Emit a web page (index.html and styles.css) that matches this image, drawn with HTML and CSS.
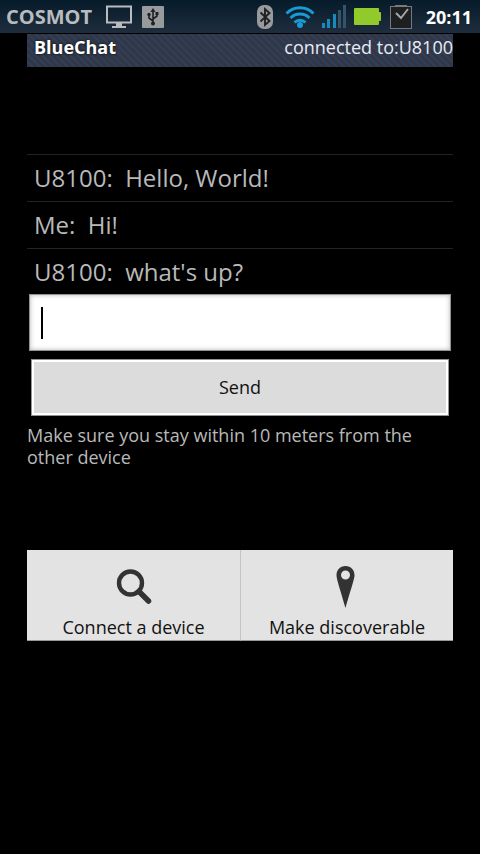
FILE: index.html
```html
<!DOCTYPE html>
<html lang="en">
<head>
<meta charset="utf-8">
<meta name="viewport" content="width=device-width, initial-scale=1">
<title>BlueChat</title>
<link rel="stylesheet" href="styles.css">
</head>
<body>
<div class="status">
  <span class="carrier">COSMOT</span>
  <svg class="monitor" width="26" height="24" viewBox="0 0 26 24" aria-hidden="true"><path d="M1 1.5h24v16H1zM13 17.5v4M6 22h14" fill="none" stroke="#b9bcbf" stroke-width="2"/><path d="M10 18h6v4h-6z" fill="#b9bcbf"/></svg>
  <svg class="usb" width="22" height="22" viewBox="0 0 22 22" aria-hidden="true"><rect width="22" height="22" rx="1" fill="#999a9b"/><path d="M11 5v12M11 15l-4-3V9M11 13l4-3V8" fill="none" stroke="#1d2226" stroke-width="1.6"/><path d="M11 2l2.5 4h-5zM13.5 6h3v3h-3z" fill="#1d2226"/><circle cx="7" cy="8.5" r="1.7" fill="#1d2226"/><circle cx="11" cy="17.5" r="2" fill="#1d2226"/></svg>
  <span class="spacer"></span>
  <svg class="bluetooth" width="16" height="24" viewBox="0 0 16 24" aria-hidden="true"><rect width="16" height="24" rx="7" fill="#999a9b"/><path d="M3.5 7.5l9 8.500L8 20V4l4.500 4-9 8.500" fill="none" stroke="#1d2226" stroke-width="1.900"/></svg>
  <svg class="wifi" width="30" height="24" viewBox="0 0 30 24" aria-hidden="true"><g fill="none" stroke="#169bd5" stroke-width="3"><path d="M1.500 8.500a19 19 0 0 1 27 0"/><path d="M5.500 13a13.500 13.500 0 0 1 19 0"/><path d="M9.500 17.500a8 8 0 0 1 11 0"/></g><circle cx="15" cy="20" r="3" fill="#169bd5"/></svg>
  <svg class="signal" width="25" height="24" viewBox="0 0 25 24" aria-hidden="true"><path d="M0 18h3v5H0zM5 14h3v9H5zM11 9h3v14h-3z" fill="#168bc0"/><path d="M16 5h3v18h-3zM21 0h3v23h-3z" fill="#34546a"/></svg>
  <svg class="battery" width="27" height="17" viewBox="0 0 27 17" aria-hidden="true"><path d="M1 0h23q1 0 1 1v3h1q1 0 1 1v7q0 1-1 1h-1v3q0 1-1 1H1q-1 0-1-1V1q0-1 1-1z" fill="#92ca2c"/></svg>
  <svg class="task" width="22" height="24" viewBox="0 0 22 24" aria-hidden="true"><path d="M5 0h12v3H5z" fill="#777a7c"/><rect x=".5" y="1.500" width="21" height="22" fill="#1e1f20" stroke="#777a7c"/><path d="M6 8l5 5 7-9" fill="none" stroke="#a4a5a6" stroke-width="2"/></svg>
  <time class="clock">20:11</time>
</div>
<main class="app">
  <header class="title">
    <h1>BlueChat</h1>
    <span>connected to:U8100</span>
  </header>
  <ul class="messages">
    <li>U8100:  Hello, World!</li>
    <li>Me:  Hi!</li>
    <li>U8100:  what's up?</li>
  </ul>
  <form class="composer">
    <div class="field">
      <input type="text" aria-label="Message">
      <span class="cursor"></span>
    </div>
    <button class="send" type="button">Send</button>
  </form>
  <p class="hint">Make sure you stay within 10 meters from the other device</p>
  <nav class="menu">
    <button type="button">
      <svg width="48" height="48" viewBox="0 0 48 48" aria-hidden="true"><circle cx="20.500" cy="20" r="11.500" fill="none" stroke="#333" stroke-width="4.400"/><path d="M29 28.500l9.500 9.500" stroke="#333" stroke-width="5.500" stroke-linecap="round"/></svg>
      <span>Connect a device</span>
    </button>
    <button type="button">
      <svg width="48" height="48" viewBox="0 0 48 48" aria-hidden="true"><path fill-rule="evenodd" d="M22.500 3c5.500 0 9 4 9 9 0 4-3 12-9 33-6-21-9-29-9-33 0-5 3.500-9 9-9zm0 4.500a4.500 4.500 0 1 0 0 9 4.500 4.500 0 0 0 0-9z" fill="#333"/></svg>
      <span>Make discoverable</span>
    </button>
  </nav>
</main>
</body>
</html>
```
FILE: styles.css
```css
* {
  box-sizing: border-box;
}

body {
  margin: 0;
  background: #000;
  color: #b9b9b9;
  font: 18px/22px "Open Sans", "Noto Sans", sans-serif;
}

button,
input {
  margin: 0;
  border: 0;
  border-radius: 0;
  font: inherit;
}

.status {
  display: flex;
  align-items: center;
  height: 33px;
  padding: 0 8px 0 6px;
  background: linear-gradient(#061b2a, #1f2d3d);
}

.status svg {
  flex: none;
}

.carrier {
  margin-right: 14px;
  color: #b9bcbf;
  font-size: 20px;
  font-weight: 700;
}

.monitor {
  margin-right: 10px;
}

.spacer {
  flex: 1;
}

.bluetooth {
  margin-right: 12px;
}

.wifi {
  margin-right: 7px;
}

.signal {
  margin-right: 7px;
}

.battery {
  margin-right: 9px;
}

.task {
  margin-right: 14px;
}

.clock {
  color: #fff;
  font-weight: 700;
}

.app {
  padding: 1px 27px 0;
}

.title {
  display: flex;
  justify-content: space-between;
  height: 33px;
  padding: 2px 0 0 7px;
  background: repeating-linear-gradient(45deg, #2f384b 0 3px, #353e50 3px 5px);
  color: #e8ebf5;
}

.title h1 {
  margin: 0;
  color: #fff;
  font-size: 18px;
  font-weight: 700;
  line-height: 22px;
  text-shadow: 0 0 3px #000;
}

.messages {
  margin: 87px 0 0;
  padding: 0;
  list-style: none;
  font-size: 24px;
  line-height: 46px;
}

.messages li {
  padding-left: 7px;
  border-top: 1px solid #242424;
  white-space: pre;
}

.field {
  position: relative;
  margin: -1px 2px 8px;
}

.field input {
  display: block;
  width: 100%;
  height: 57px;
  padding: 0 12px;
  border: 1px solid #929292;
  outline: 0;
  background: #fff;
  box-shadow: inset 0 0 5px #b8b8b8;
  color: #000;
}

.cursor {
  position: absolute;
  top: 13px;
  left: 12px;
  width: 2px;
  height: 32px;
  background: #000;
}

.composer {
  display: flex;
  flex-direction: column;
}

.send {
  height: 57px;
  margin: 0 4px;
  padding: 0 0 2px;
  border: 1px solid #929292;
  background: #dcdcdc;
  box-shadow: inset 0 0 0 2px #fff;
  color: #111;
}

.hint {
  margin: 8px 0 0;
  padding-right: 20px;
}

.menu {
  display: grid;
  grid-template-columns: 1fr 1fr;
  margin-top: 82px;
}

.menu button {
  display: flex;
  flex-direction: column;
  align-items: center;
  height: 91px;
  padding: 13px 0 0;
  border-bottom: 1px solid #999;
  background: #e3e3e3;
  color: #111;
}

.menu button + button {
  border-left: 1px solid #c4c4c4;
}

.menu span {
  margin-top: 5px;
}
```
